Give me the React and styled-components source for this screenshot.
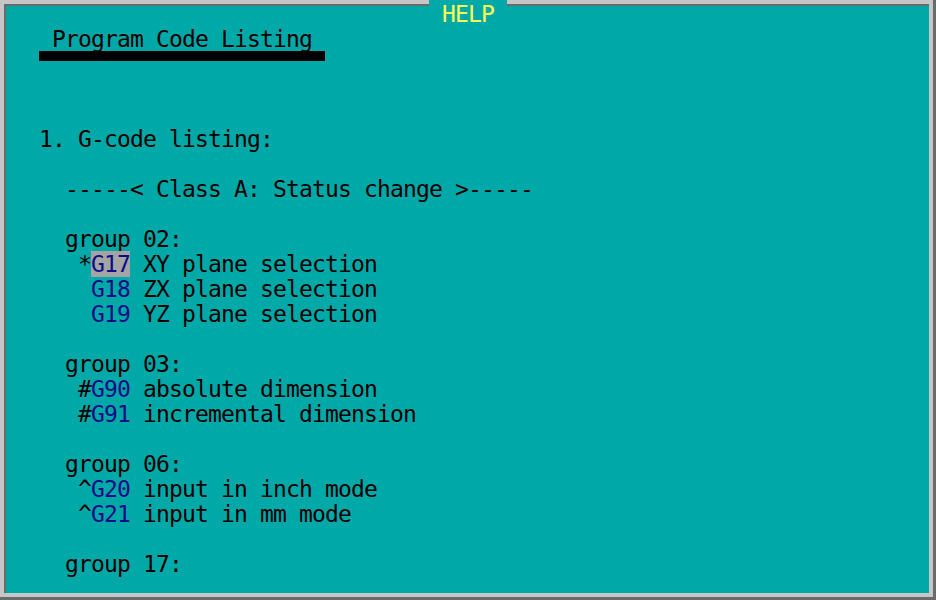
import React from "react";
import styled, { createGlobalStyle } from "styled-components";

const GlobalStyle = createGlobalStyle`
  html, body {
    margin: 0;
    padding: 0;
    background: #00a8a8;
  }
`;

const groups = [
  {
    name: "group 02:",
    codes: [
      { mark: "*", code: "G17", text: "XY plane selection", active: true },
      { mark: " ", code: "G18", text: "ZX plane selection" },
      { mark: " ", code: "G19", text: "YZ plane selection" },
    ],
  },
  {
    name: "group 03:",
    codes: [
      { mark: "#", code: "G90", text: "absolute dimension" },
      { mark: "#", code: "G91", text: "incremental dimension" },
    ],
  },
  {
    name: "group 06:",
    codes: [
      { mark: "^", code: "G20", text: "input in inch mode" },
      { mark: "^", code: "G21", text: "input in mm mode" },
    ],
  },
  { name: "group 17:", codes: [] },
];

const App = () => {
  return (
    <>
      <GlobalStyle />
      <Window>
        <TitleTab>HELP</TitleTab>
        <Panel>
          <Heading>Program Code Listing</Heading>
          <Blank />
          <Blank />
          <Blank />
          <Line>1. G-code listing:</Line>
          <Blank />
          <Line $indent={2}>-----&lt; Class A: Status change &gt;-----</Line>
          {groups.map((g) => (
            <React.Fragment key={g.name}>
              <Blank />
              <Line $indent={2}>{g.name}</Line>
              {g.codes.map((c) => (
                <Line key={c.code} $indent={3}>
                  {c.mark}
                  <Code $active={c.active}>{c.code}</Code> {c.text}
                </Line>
              ))}
            </React.Fragment>
          ))}
        </Panel>
      </Window>
    </>
  );
};

export default App;

const Window = styled.div`
  position: relative;
  width: 936px;
  height: 600px;
  box-sizing: border-box;
  padding: 4px;
  background: #c6c6c6;
  border-right: 3px solid #6a6a6a;
  border-bottom: 3px solid #6a6a6a;
  display: flex;
  font-family: "DejaVu Sans Mono", "Liberation Mono", monospace;
  font-size: 23px;
  letter-spacing: -0.85px;
  color: #000;
`;

const Panel = styled.div`
  flex: 1;
  background: #00a8a8;
  border-top: 2px solid #6a6a6a;
  border-left: 2px solid #6a6a6a;
  padding: 19px 0 0 33px;
  display: flex;
  flex-direction: column;
  overflow: hidden;
`;

const TitleTab = styled.div`
  position: absolute;
  top: 0;
  left: 429px;
  width: 78px;
  height: 25px;
  background: #00a8a8;
  color: #ffff54;
  text-align: center;
  line-height: 29px;
  z-index: 1;
`;

const Heading = styled.div`
  position: relative;
  align-self: flex-start;
  height: 25px;
  line-height: 29px;
  padding: 0 13px;
  white-space: pre;

  &::after {
    content: "";
    position: absolute;
    left: 0;
    right: 0;
    top: 26px;
    height: 10px;
    background: #000;
  }
`;

const Line = styled.div`
  height: 25px;
  line-height: 29px;
  white-space: pre;
  padding-left: ${(p) => (p.$indent || 0) * 13}px;
`;

const Blank = styled.div`
  height: 25px;
  flex-shrink: 0;
`;

const Code = styled.span`
  color: #0c0c84;
  background: ${(p) => (p.$active ? "#a4a4a4" : "transparent")};
`;
